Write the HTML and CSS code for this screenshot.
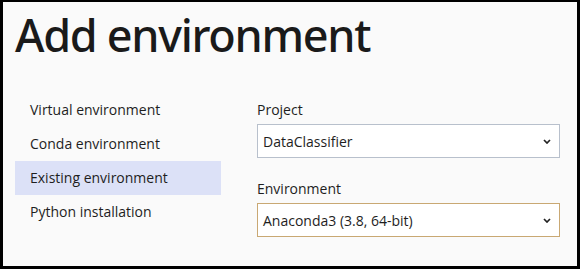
FILE: index.html
```html
<!DOCTYPE html>
<html lang="en">
<head>
    <meta charset="UTF-8">
    <title>Add environment</title>
    <link rel="stylesheet" href="styles.css">
</head>
<body>
    <div class="dialog">
        <h1 class="title">Add environment</h1>
        <div class="content">
            <ul class="env-list">
                <li class="env-item">Virtual environment</li>
                <li class="env-item">Conda environment</li>
                <li class="env-item selected">Existing environment</li>
                <li class="env-item">Python installation</li>
            </ul>
            <div class="form">
                <label class="field-label">Project</label>
                <div class="select">
                    <span>DataClassifier</span>
                    <svg class="chevron" width="8" height="5" viewBox="0 0 8 5"><path d="M1 1 L4 4 L7 1" fill="none" stroke="#222" stroke-width="1.7"/></svg>
                </div>
                <label class="field-label">Environment</label>
                <div class="select focused">
                    <span>Anaconda3 (3.8, 64-bit)</span>
                    <svg class="chevron" width="8" height="5" viewBox="0 0 8 5"><path d="M1 1 L4 4 L7 1" fill="none" stroke="#222" stroke-width="1.7"/></svg>
                </div>
            </div>
        </div>
    </div>
</body>
</html>
```

FILE: styles.css
```css
html, body {
    margin: 0;
    padding: 0;
}

body {
    width: 580px;
    height: 269px;
    font-family: "Open Sans", "Noto Sans", sans-serif;
    color: #1e1e1e;
}

.dialog {
    box-sizing: border-box;
    width: 580px;
    height: 269px;
    background: #fafafa;
    border-style: solid;
    border-color: #000;
    border-width: 2px 3px 3px 3px;
    padding: 0 0 0 12px;
}

.title {
    margin: 0;
    padding-top: 10px;
    height: 80px;
    box-sizing: border-box;
    font-family: "Noto Sans", "Open Sans", sans-serif;
    font-size: 45px;
    line-height: 46px;
    font-weight: 500;
    letter-spacing: -1.3px;
    color: #1a1a1a;
}

.content {
    display: flex;
    gap: 36px;
    padding-top: 11px;
}

.env-list {
    list-style: none;
    margin: 0;
    padding: 0;
    width: 206px;
}

.env-item {
    height: 34px;
    line-height: 34px;
    padding-left: 15px;
    font-size: 14px;
}

.env-item.selected {
    background: #dce1f7;
}

.form {
    width: 303px;
    display: flex;
    flex-direction: column;
    padding-top: 7px;
}

.field-label {
    font-size: 14px;
    line-height: 20px;
    margin-bottom: 4px;
}

.select {
    box-sizing: border-box;
    height: 34px;
    border: 1px solid #b8c0cc;
    background: #fff;
    display: flex;
    align-items: center;
    justify-content: space-between;
    padding: 0 8px 0 5px;
    font-size: 14px;
    margin-bottom: 21px;
}

.select.focused {
    border-color: #c9a873;
}

.chevron {
    display: block;
}
```
